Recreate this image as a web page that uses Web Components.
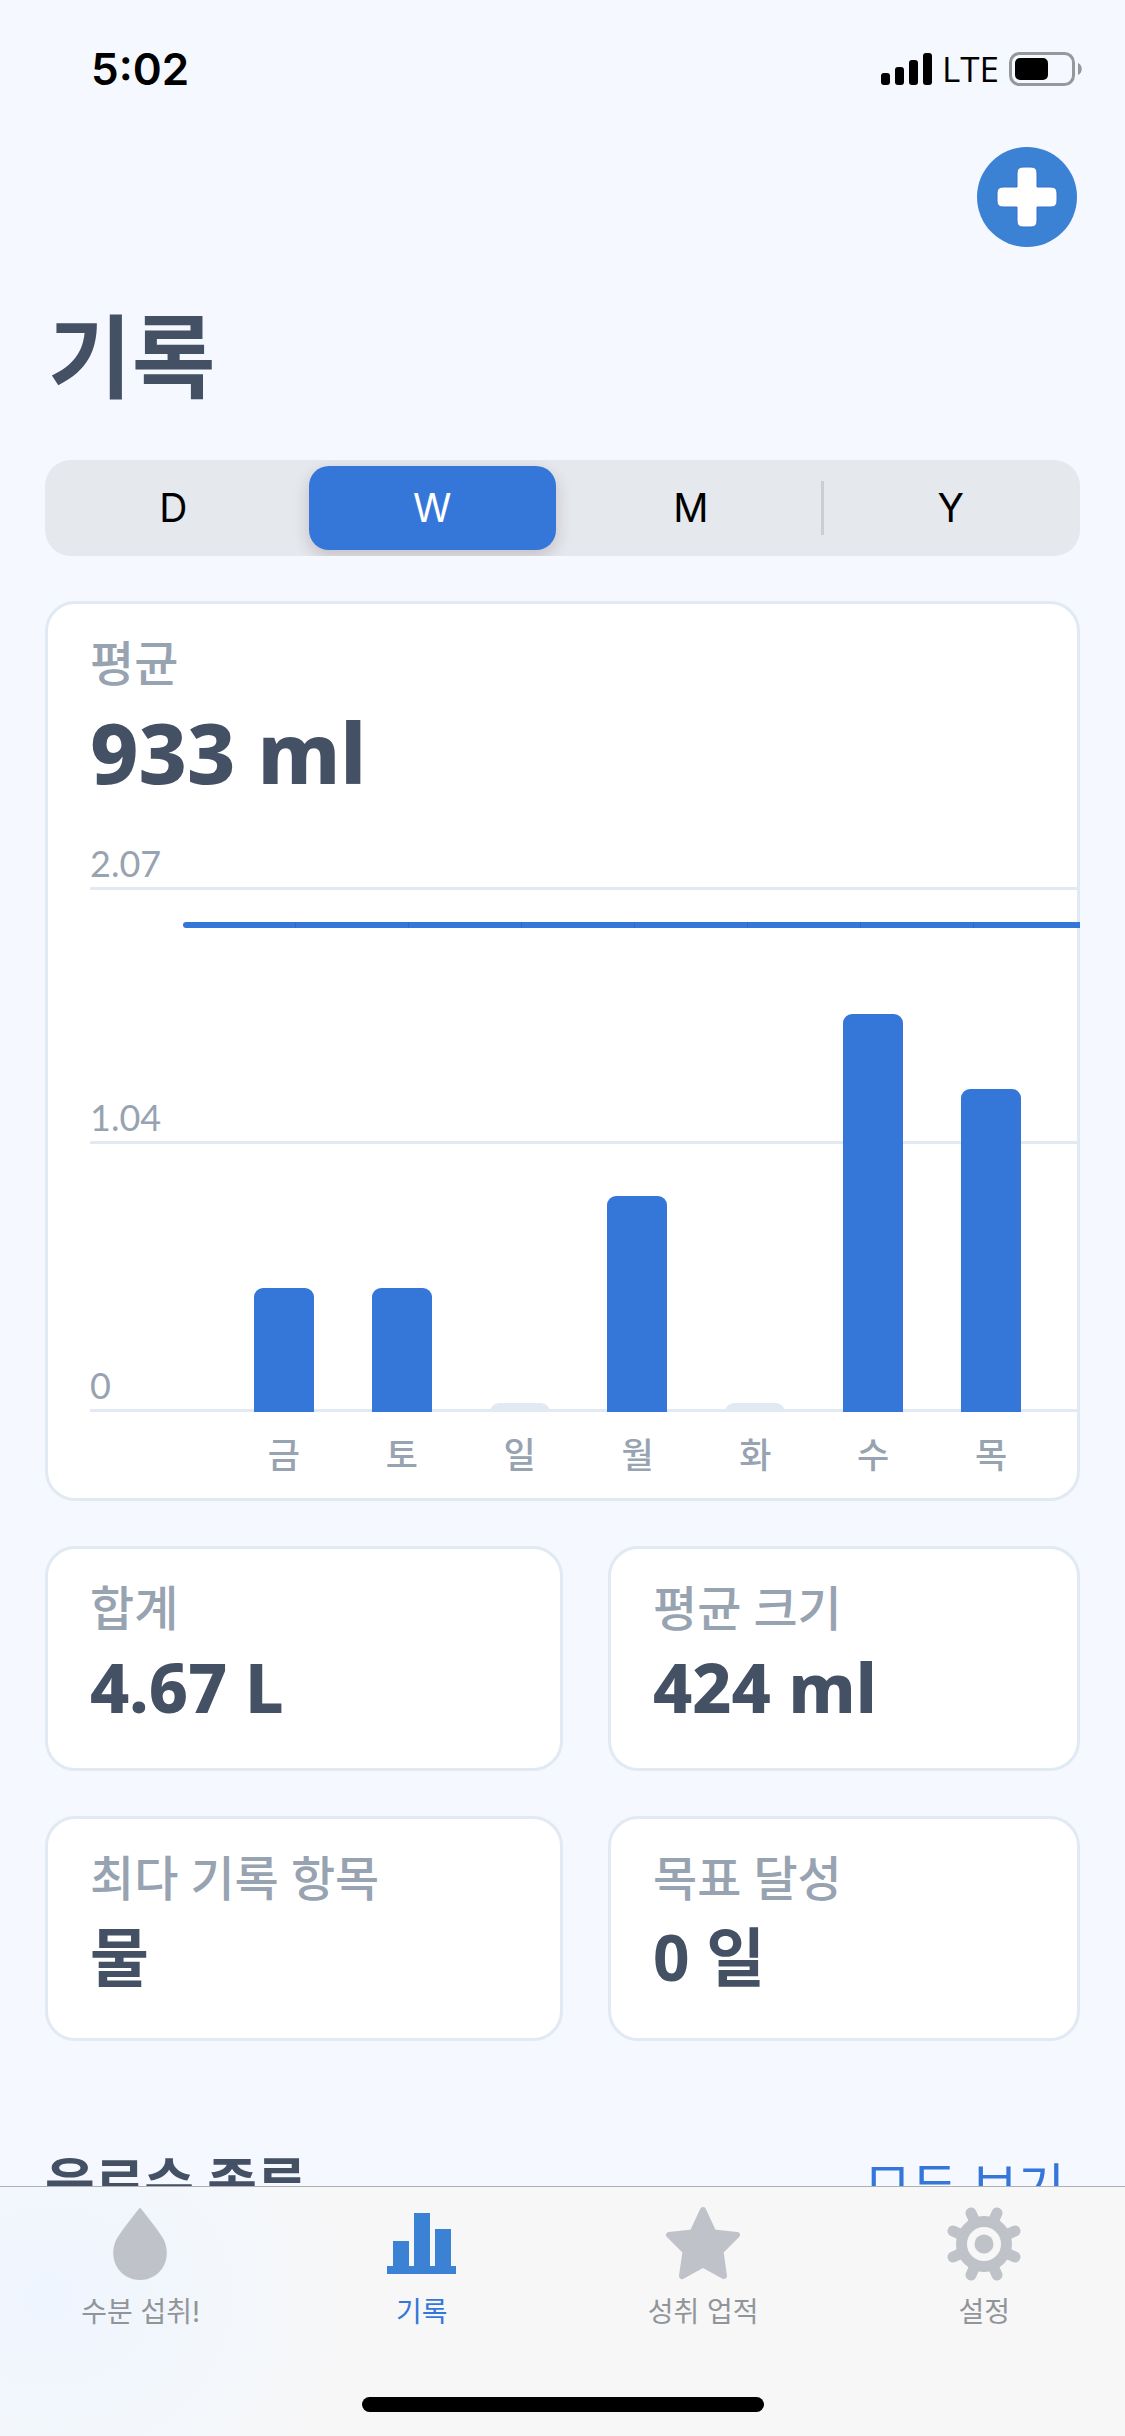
<!DOCTYPE html>
<html lang="ko">
<head>
<meta charset="utf-8">
<meta name="viewport" content="width=device-width, initial-scale=1">
<title>기록</title>
<style>
  :root {
    --ink: #445064;
    --muted: #97a3b1;
    --blue: #3577d9;
    --icon-blue: #3b82d4;
    --line: #e1e9f3;
    --ui: Inter, "Noto Sans CJK KR", sans-serif;
    --text: Lato, "Noto Sans CJK KR", sans-serif;
    --figures: "Noto Sans", "Noto Sans CJK KR", sans-serif;
  }
  html, body { margin: 0; height: 100%; }
  body { background: #f5f8fe; font-family: var(--text); color: var(--ink); }
</style>
</head>
<body>
<water-app></water-app>
<script>
const define = (name, html, setup) => {
  const template = document.createElement('template');
  template.innerHTML = '<style>*{box-sizing:border-box}svg{display:block}</style>' + html;
  customElements.define(name, class extends HTMLElement {
    constructor() {
      super();
      this.attachShadow({ mode: 'open' }).append(template.content.cloneNode(true));
    }
    connectedCallback() { if (setup) setup(this, this.shadowRoot); }
  });
};

define('status-bar', `
<style>
  :host { display: flex; justify-content: space-between; align-items: center; height: 138px; padding: 0 42px 0 91px; color: #000; font-family: var(--ui); }
  time { font-size: 44px; font-weight: 600; line-height: 54px; }
  .right { display: flex; align-items: center; gap: 10px; }
  .net { font: 35px/42px "Open Sans", sans-serif; }
</style>
<time>5:02</time>
<div class="right">
  <svg width="51" height="34" viewBox="0 0 51 34" aria-hidden="true"><rect y="21" width="9" height="12" rx="3"/><rect x="14" y="15" width="9" height="18" rx="3"/><rect x="28" y="8" width="9" height="25" rx="3"/><rect x="42" y="1" width="9" height="32" rx="3"/></svg>
  <span class="net">LTE</span>
  <svg width="74" height="34" viewBox="0 0 74 34" aria-hidden="true"><rect x="1.5" y="1.5" width="63" height="31" rx="9" fill="none" stroke="#97989c" stroke-width="3"/><rect x="6" y="6" width="33" height="22" rx="5"/><path d="M69 11c5 2 5 10 0 12z" fill="#97989c"/></svg>
</div>`);

define('add-button', `
<style>
  :host { display: flex; justify-content: flex-end; padding: 9px 3px 0 0; }
  button { width: 100px; height: 100px; padding: 0; border: 0; background: none; }
</style>
<button type="button" aria-label="추가"><svg width="100" height="100" viewBox="0 0 100 100"><circle cx="50" cy="50" r="50" fill="#3b82d4"/><path d="M46 20h8q6 0 6 6v14h14q6 0 6 6v8q0 6-6 6h-14v14q0 6-6 6h-8q-6 0-6-6v-14h-14q-6 0-6-6v-8q0-6 6-6h14v-14q0-6 6-6z" fill="#fff" stroke="#3470cc"/></svg></button>`);

define('period-picker', `
<style>
  :host { display: block; }
  fieldset { display: grid; grid-template-columns: repeat(4, 1fr); margin: 0; padding: 6px 0; border: 0; border-radius: 26px; background: #e5e8ed; height: 96px; overflow: hidden; }
  label { display: flex; align-items: center; justify-content: center; margin: 0 7px 0 5px; border-radius: 20px; font: 39px/48px var(--ui); color: #000; }
  input { appearance: none; width: 0; height: 0; margin: 0; outline: 0; }
  label:has(:checked) { background: var(--blue); color: #fff; box-shadow: 0 6px 16px rgba(60, 30, 40, .2); }
  .last { margin: 0; background: linear-gradient(#cbced3, #cbced3) left center / 3px 54px no-repeat; border-radius: 0; }
</style>
<fieldset aria-label="기간">
  <label><input type="radio" name="p">D</label>
  <label><input type="radio" name="p" checked>W</label>
  <label><input type="radio" name="p">M</label>
  <label class="last"><input type="radio" name="p">Y</label>
</fieldset>`);

define('stat-card', `
<style>
  :host { display: block; box-sizing: border-box; background: #fff; border: 3px solid var(--line); border-radius: 30px; padding: 23px 0 0 42px; min-height: 225px; }
  .label { font-size: 48px; font-weight: 500; line-height: 72px; color: var(--muted); }
  .value { font-family: var(--figures); font-size: 68px; font-weight: 800; line-height: 86px; }
  :host([hangul]) .value { font-size: 64px; font-weight: 700; }
  :host([large]) { padding-bottom: 18px; }
  :host([large]) .value { font-size: 84px; line-height: 105px; }
</style>
<div class="label"><slot name="label"></slot></div>
<div class="value"><slot name="value"></slot></div>
<slot></slot>`);

define('week-chart', `
<style>
  :host { display: block; padding-top: 33px; }
  .plot { display: grid; }
  .plot > * { grid-area: 1 / 1; }
  .grid { display: grid; grid-template-rows: 53px 254px 268px; }
  .grid div { display: flex; align-items: flex-end; border-bottom: 3px solid var(--line); font-size: 36px; line-height: 48px; color: var(--muted); }
  .goal { align-self: end; height: 6px; margin: 0 -3px 484px 93px; border-radius: 3px 0 0 3px; background: repeating-linear-gradient(90deg, var(--blue) 0 112px, #2c69c8 112px 113px); }
  .bars, .days { display: grid; grid-template-columns: repeat(7, 1fr); margin: 0 27px 0 135px; justify-items: center; }
  .bars { align-items: end; }
  .bar { width: 60px; border-radius: 9px 9px 0 0; background: var(--blue); }
  .bar.empty { background: var(--line); }
  .days { padding-top: 17px; font-size: 35px; font-weight: 500; line-height: 51px; color: var(--muted); }
</style>
<div class="plot">
  <div class="grid"><div>2.07</div><div>1.04</div><div>0</div></div>
  <div class="goal"></div>
  <div class="bars"></div>
</div>
<div class="days"></div>`, (host, root) => {
  const pixelsPerLitre = 249;
  const week = [['금', .5], ['토', .5], ['일', 0], ['월', .87], ['화', 0], ['수', 1.6], ['목', 1.3]];
  for (const [day, litres] of week) {
    const bar = document.createElement('div');
    bar.className = litres ? 'bar' : 'bar empty';
    bar.style.height = Math.max(9, Math.floor(litres * pixelsPerLitre)) + 'px';
    root.querySelector('.bars').append(bar);
    const label = document.createElement('span');
    label.textContent = day;
    root.querySelector('.days').append(label);
  }
});

define('section-header', `
<style>
  :host { display: flex; justify-content: space-between; align-items: flex-end; padding-right: 15px; }
  h2 { margin: 0; font-size: 54px; font-weight: 700; line-height: 80px; }
  a { font-size: 51px; line-height: 72px; color: var(--blue); text-decoration: none; }
</style>
<h2><slot></slot></h2><a href="#all">모두 보기</a>`);

define('tab-item', `
<style>
  :host { display: block; flex: 1; color: #929598; }
  :host([active]) { color: var(--blue); }
  a { display: flex; flex-direction: column; align-items: center; color: inherit; text-decoration: none; font: 28px/42px var(--ui); gap: 9px; }
</style>
<a><slot name="icon"></slot><span><slot></slot></span></a>`, (host, root) => {
  root.querySelector('a').href = host.getAttribute('to');
});

define('tab-bar', `
<style>
  :host { display: flex; flex-direction: column; justify-content: space-between; align-items: center; height: 250px; flex: none; border-top: 1px solid #aeb0b4; background: radial-gradient(ellipse 300px 260px at 50px 110px, #eff5ff, #f3f7fb 60%, transparent), #f7f7f8; padding: 19px 0 24px; }
  nav { display: flex; width: 100%; }
  svg { width: 76px; height: 76px; fill: #bfc2c8; }
  .home { width: 402px; height: 15px; border-radius: 8px; background: #000; }
</style>
<nav>
  <tab-item to="#intake"><svg slot="icon" viewBox="0 0 76 76"><path d="M37 1.500C47 14 55 24 61 34C70 55 56 74 37 74S4 55 13 34C19 24 27 14 37 1.500Z"/></svg>수분 섭취!</tab-item>
  <tab-item to="#history" active><svg slot="icon" viewBox="0 0 76 76"><path fill="#3b82d4" d="M3 60h6V35h16v25h5V7h16v53h5V23h16v37h5v8H3z"/></svg>기록</tab-item>
  <tab-item to="#awards"><svg slot="icon" viewBox="0 0 76 76"><path stroke="#bfc2c8" stroke-width="6" stroke-linejoin="round" d="M38 4L48.500 26.500L72 29L55.500 45.500L59 70L38 58.500L17 70L20.500 45.500L4 29L27.500 26.500Z"/></svg>성취 업적</tab-item>
  <tab-item to="#settings"><svg slot="icon" viewBox="0 0 76 76"><g fill="none" stroke="#bfc2c8"><circle cx="38" cy="38" r="22.500" stroke-width="11"/><g stroke-width="11" stroke-linecap="round"><path d="M29 16L25 7M47 16L51 7M60 29L69 25M60 47L69 51M47 60L51 69M29 60L25 69M16 47L7 51M16 29L7 25"/></g></g><circle cx="38" cy="38" r="9.500"/></svg>설정</tab-item>
</nav>
<div class="home"></div>`);

define('water-app', `
<style>
  :host { display: flex; flex-direction: column; height: 100vh; }
  main { flex: 1; min-height: 0; overflow-y: auto; scrollbar-width: none; padding: 0 45px; }
  h1 { margin: 43px 0 39px; padding-left: 3px; font-size: 91px; font-weight: 700; line-height: 131px; }
  .cards { display: grid; grid-template-columns: 518fr 472fr; gap: 45px; margin: 45px 0 102px; }
  period-picker { margin-bottom: 45px; }
</style>
<status-bar></status-bar>
<main>
  <add-button></add-button>
  <h1>기록</h1>
  <period-picker></period-picker>
  <stat-card large><span slot="label">평균</span><span slot="value">933 ml</span><week-chart></week-chart></stat-card>
  <div class="cards">
    <stat-card><span slot="label">합계</span><span slot="value">4.67 L</span></stat-card>
    <stat-card><span slot="label">평균 크기</span><span slot="value">424 ml</span></stat-card>
    <stat-card hangul><span slot="label">최다 기록 항목</span><span slot="value">물</span></stat-card>
    <stat-card hangul><span slot="label">목표 달성</span><span slot="value">0 일</span></stat-card>
  </div>
  <section-header>음료수 종류</section-header>
</main>
<tab-bar></tab-bar>`);
</script>
</body>
</html>
